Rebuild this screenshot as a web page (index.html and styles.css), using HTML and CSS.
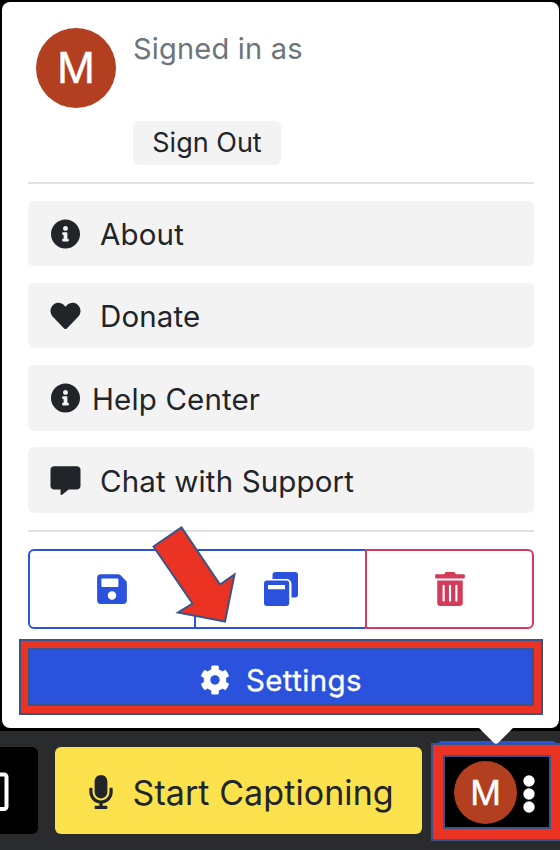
FILE: index.html
```
<!DOCTYPE html>
<html lang="en">
<head>
<meta charset="utf-8">
<title>Captioning</title>
<link rel="stylesheet" href="styles.css">
</head>
<body>
<div class="menu">
  <div class="account">
    <div class="avatar"><span>M</span></div>
    <div class="account-info">
      <div class="signed">Signed in as</div>
      <button class="signout"><span>Sign Out</span></button>
    </div>
  </div>
  <hr>
  <nav class="links">
    <a class="item"><svg class="icon" viewBox="0 0 512 512"><path d="M256 8C119.043 8 8 119.083 8 256c0 136.997 111.043 248 248 248s248-111.003 248-248C504 119.083 392.957 8 256 8zm0 110c23.196 0 42 18.804 42 42s-18.804 42-42 42-42-18.804-42-42 18.804-42 42-42zm56 254c0 6.627-5.373 12-12 12h-88c-6.627 0-12-5.373-12-12v-24c0-6.627 5.373-12 12-12h12v-64h-12c-6.627 0-12-5.373-12-12v-24c0-6.627 5.373-12 12-12h64c6.627 0 12 5.373 12 12v100h12c6.627 0 12 5.373 12 12v24z"/></svg><span>About</span></a>
    <a class="item"><svg class="icon" viewBox="0 0 512 512"><path d="M462.3 62.6C407.5 15.9 326 24.3 275.7 76.2L256 96.5l-19.7-20.3C186.1 24.3 104.5 15.9 49.7 62.6c-62.8 53.6-66.1 149.8-9.9 207.9l193.5 199.8c12.5 12.9 32.8 12.9 45.3 0l193.5-199.8c56.3-58.1 53-154.3-9.8-207.9z"/></svg><span>Donate</span></a>
    <a class="item tight"><svg class="icon" viewBox="0 0 512 512"><path d="M256 8C119.043 8 8 119.083 8 256c0 136.997 111.043 248 248 248s248-111.003 248-248C504 119.083 392.957 8 256 8zm0 110c23.196 0 42 18.804 42 42s-18.804 42-42 42-42-18.804-42-42 18.804-42 42-42zm56 254c0 6.627-5.373 12-12 12h-88c-6.627 0-12-5.373-12-12v-24c0-6.627 5.373-12 12-12h12v-64h-12c-6.627 0-12-5.373-12-12v-24c0-6.627 5.373-12 12-12h64c6.627 0 12 5.373 12 12v100h12c6.627 0 12 5.373 12 12v24z"/></svg><span>Help Center</span></a>
    <a class="item"><svg class="icon" viewBox="0 0 512 512"><path d="M64 5h384c35 0 64 25 64 60v276c0 35-29 60-64 60H310L192 493c-8 6-20 3-20-9v-83H64c-35 0-64-25-64-60V65C0 30 29 5 64 5z"/></svg><span>Chat with Support</span></a>
  </nav>
  <hr>
  <div class="actions">
    <button class="action save"><svg width="30" height="34" viewBox="0 0 448 512"><path d="M433.941 129.941l-83.882-83.882A48 48 0 0 0 316.118 32H48C21.49 32 0 53.49 0 80v352c0 26.51 21.49 48 48 48h352c26.51 0 48-21.49 48-48V163.882a48 48 0 0 0-14.059-33.941zM224 416c-35.346 0-64-28.654-64-64 0-35.346 28.654-64 64-64s64 28.654 64 64c0 35.346-28.654 64-64 64zm96-304.52V212c0 6.627-5.373 12-12 12H76c-6.627 0-12-5.373-12-12V108c0-6.627 5.373-12 12-12h228.52c3.183 0 6.235 1.264 8.485 3.515l3.48 3.48A11.996 11.996 0 0 1 320 111.48z"/></svg></button>
    <button class="action copy"><svg width="34" height="34" viewBox="0 0 34 34"><path d="M11.5 0H31a3 3 0 0 1 3 3v19.5a3 3 0 0 1-3 3h-3.5V12a5 5 0 0 0-5-5h-14V3a3 3 0 0 1 3-3z"/><path fill-rule="evenodd" d="M3 8.6h19.2a3 3 0 0 1 3 3V31a3 3 0 0 1-3 3H3a3 3 0 0 1-3-3V11.600a3 3 0 0 1 3-3zM4 13v4.200h17V13z"/></svg></button>
    <button class="action trash"><svg width="30" height="34" viewBox="0 0 448 512"><path d="M32 464a48 48 0 0 0 48 48h288a48 48 0 0 0 48-48V128H32zm272-256a16 16 0 0 1 32 0v224a16 16 0 0 1-32 0zm-96 0a16 16 0 0 1 32 0v224a16 16 0 0 1-32 0zm-96 0a16 16 0 0 1 32 0v224a16 16 0 0 1-32 0zM432 32H312l-9.400-18.700A24 24 0 0 0 281.100 0H166.800a23.720 23.720 0 0 0-21.400 13.300L136 32H16A16 16 0 0 0 0 48v32a16 16 0 0 0 16 16h416a16 16 0 0 0 16-16V48a16 16 0 0 0-16-16z"/></svg></button>
  </div>
  <button class="settings"><svg width="30" height="30" viewBox="0 0 512 512"><path d="M487.400 315.700l-42.600-24.600c4.300-23.200 4.300-47 0-70.200l42.600-24.600c4.900-2.800 7.100-8.600 5.500-14-11.100-35.600-30-67.800-54.700-94.600-3.800-4.100-10-5.100-14.800-2.300L380.800 110c-17.900-15.400-38.500-27.300-60.800-35.100V25.800c0-5.600-3.900-10.500-9.400-11.700-36.700-8.200-74.300-7.800-109.200 0-5.500 1.200-9.400 6.100-9.400 11.700V75c-22.200 7.900-42.800 19.800-60.800 35.100L88.700 85.500c-4.900-2.800-11-1.900-14.800 2.300-24.700 26.700-43.600 58.900-54.700 94.600-1.700 5.400.6 11.200 5.500 14L67.300 221c-4.300 23.200-4.300 47 0 70.200l-42.600 24.600c-4.900 2.800-7.100 8.600-5.500 14 11.100 35.600 30 67.800 54.700 94.600 3.800 4.100 10 5.100 14.800 2.300l42.600-24.600c17.900 15.400 38.500 27.300 60.800 35.100v49.200c0 5.600 3.900 10.500 9.400 11.700 36.700 8.200 74.300 7.800 109.200 0 5.500-1.200 9.400-6.100 9.400-11.700v-49.200c22.200-7.900 42.800-19.800 60.800-35.100l42.600 24.600c4.900 2.800 11 1.900 14.800-2.300 24.700-26.700 43.600-58.900 54.700-94.600 1.500-5.500-.7-11.300-5.600-14.100zM256 336c-44.100 0-80-35.900-80-80s35.900-80 80-80 80 35.900 80 80-35.900 80-80 80z"/></svg><span>Settings</span></button>
  <svg class="tail" width="34" height="17" viewBox="0 0 34 17"><path d="M0 0h34L19.500 14.500Q17 17 14.500 14.500z"/></svg>
  <svg class="arrow" width="90" height="104" viewBox="150 522 90 104"><path d="M153.500 546.500L181.500 527.500L220 584.500L234.500 574.500L225 621.500L178 612.500L192.500 603.500z"/></svg>
  <div class="mark mark-settings"></div>
</div>
<footer class="bar">
  <button class="window"><svg width="10" height="40" viewBox="0 0 10 40"><rect x="-30" y="2.500" width="36.500" height="34.500" rx="2.500"/></svg></button>
  <button class="start"><svg width="24" height="34" viewBox="0 0 352 512"><path d="M176 352c53.020 0 96-42.980 96-96V96c0-53.020-42.980-96-96-96S80 42.980 80 96v160c0 53.020 42.980 96 96 96zm160-160h-16c-8.840 0-16 7.160-16 16v48c0 74.800-64.490 134.820-140.790 127.380C96.710 376.890 48 317.110 48 250.300V208c0-8.840-7.160-16-16-16H16c-8.840 0-16 7.160-16 16v40.160c0 89.640 63.970 169.550 152 181.690V464H96c-8.840 0-16 7.160-16 16v16c0 8.840 7.160 16 16 16h160c8.840 0 16-7.160 16-16v-16c0-8.840-7.160-16-16-16h-56v-33.770C285.710 418.470 352 344.900 352 256v-48c0-8.840-7.160-16-16-16z"/></svg><span>Start Captioning</span></button>
  <button class="profile">
    <span class="avatar small"><span>M</span></span>
    <svg width="12" height="38" viewBox="0 0 12 38"><circle cx="6" cy="6" r="5.700"/><circle cx="6" cy="19" r="5.700"/><circle cx="6" cy="32" r="5.700"/></svg>
    <i class="mark mark-profile"></i>
  </button>
</footer>
</body>
</html>
```
FILE: styles.css
```
* { box-sizing: border-box; }
body {
  margin: 0;
  width: 560px;
  height: 850px;
  overflow: hidden;
  background: #000;
  color: #212429;
  font-family: Inter, sans-serif;
  font-size: 29px;
  display: flex;
  flex-direction: column;
}
button {
  margin: 0;
  padding: 0;
  border: 0;
  font: inherit;
  color: inherit;
}
svg { display: block; flex: none; fill: currentColor; }
span { white-space: nowrap; }
.menu {
  position: relative;
  z-index: 1;
  height: 726px;
  margin: 2px 1px 3px 2px;
  padding: 26px 25px 0 26px;
  background: #fff;
  border-radius: 8px;
}
.account { display: flex; gap: 17px; height: 154px; padding-left: 8px; }
.avatar {
  flex: none;
  display: flex;
  align-items: center;
  justify-content: center;
  width: 80px;
  height: 80px;
  border-radius: 50%;
  background: #b13f20;
  color: #fff;
  font-size: 42px;
  line-height: 1;
  -webkit-text-stroke: 0.400px #fff;
}
.signed { height: 92.500px; padding-top: 3px; line-height: 36px; color: #6c757d; letter-spacing: 0.200px; }
.signout {
  width: 148px;
  height: 44px;
  border-radius: 6px;
  background: #f3f3f3;
  font-size: 27px;
}
hr { height: 2px; margin: 0; border: 0; background: #e0e0e0; }
.links { display: flex; flex-direction: column; gap: 16.800px; padding: 16.600px 0 17.400px; }
.item {
  display: flex;
  align-items: center;
  gap: 19.500px;
  height: 65.500px;
  padding: 1px 0 0 21.500px;
  border-radius: 6px;
  background: #f3f3f3;
  font-size: 29.500px;
  letter-spacing: 0.150px;
}
.item span { padding-top: 0.500px; }
.tight { gap: 11.500px; }
.icon { width: 31px; height: 30px; }
.actions { display: flex; height: 80px; margin-top: 17px; }
.action {
  display: flex;
  align-items: center;
  justify-content: center;
  border: 2px solid #2b52dd;
  background: #fff;
  color: #2b52dd;
}
.save { width: 168px; border-radius: 6px 0 0 6px; }
.copy { width: 171px; border-right: 0; margin-left: -2px; }
.trash { width: 169px; border-color: #d23b59; color: #d23b59; border-radius: 0 6px 6px 0; }
.settings {
  display: flex;
  align-items: center;
  justify-content: center;
  gap: 16px;
  width: 506px;
  height: 62px;
  margin-top: 17px;
  padding-top: 5px;
  background: #2b52dd;
  color: #fff;
  font-size: 29.500px;
  letter-spacing: 0.400px;
  -webkit-text-stroke: 0.300px #fff;
}
.tail { position: absolute; left: 477px; top: 726px; color: #fff; }
.arrow { position: absolute; left: 148px; top: 520px; fill: #eb3323; stroke: #3a5489; stroke-width: 2px; }
.mark { position: absolute; border: 2px solid #3a5489; }
.mark::before { content: ""; position: absolute; inset: 0; border: 7px solid #eb3323; }
.mark::after { content: ""; position: absolute; inset: 7px; border: 2px solid #3a5489; }
.mark-settings { left: 17px; top: 637px; width: 524px; height: 76px; }
.bar {
  flex: 1;
  display: flex;
  align-items: flex-start;
  padding-top: 10px;
  background: #2a2b2d;
}
.window {
  display: flex;
  align-items: center;
  width: 38px;
  height: 87px;
  margin: 6px 17px 0 0;
  padding-top: 2px;
  border-radius: 0 6px 6px 0;
  background: #000;
  color: #fff;
}
.window rect { fill: none; stroke: currentColor; stroke-width: 4px; }
.start {
  display: flex;
  align-items: center;
  gap: 19.500px;
  width: 367px;
  height: 87px;
  margin-top: 6px;
  padding: 3px 0 0 34px;
  border-radius: 6px;
  background: #fbe24c;
  font-size: 34px;
  letter-spacing: 0.080px;
}
.profile {
  position: relative;
  display: flex;
  align-items: center;
  gap: 6px;
  width: 122px;
  height: 98px;
  margin-left: 14px;
  padding: 3px 0 0 18px;
  border-top: 2px solid #2b52dd;
  border-radius: 6px;
  background: #000;
  color: #fff;
}
.profile svg { margin-top: 2px; }
.small { width: 63px; height: 63px; font-size: 34px; }
.mark-profile { left: -5px; top: 0; width: 132px; height: 98px; }
.mark-profile::before { border-width: 10px; }
.mark-profile::after { inset: 10px; }
```
